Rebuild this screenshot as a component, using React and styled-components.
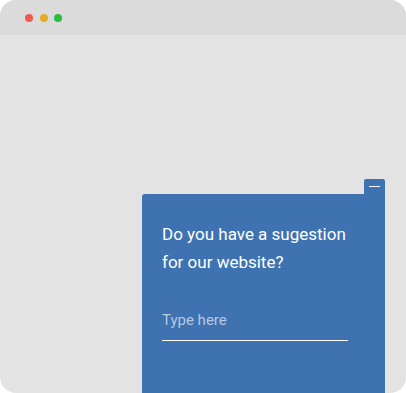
import styled, { createGlobalStyle } from "styled-components";

const GlobalStyle = createGlobalStyle`
  html, body {
    margin: 0;
    background: #ffffff;
    font-family: Roboto, "Liberation Sans", sans-serif;
  }
`;

const Frame = styled.div`
  width: 406px;
  height: 393px;
  border-radius: 16px;
  overflow: hidden;
  display: flex;
  flex-direction: column;
  background: #e3e3e3;
`;

const TitleBar = styled.div`
  height: 35px;
  flex-shrink: 0;
  background: #dbdbdb;
  display: flex;
  align-items: center;
  gap: 6.5px;
  padding-left: 25px;
`;

const Dot = styled.span`
  width: 8px;
  height: 8px;
  border-radius: 50%;
  background: ${(p) => p.color};
`;

const Content = styled.div`
  flex: 1;
  display: flex;
  flex-direction: column;
  align-items: flex-end;
  padding: 144px 21px 0 0;
  min-height: 0;
`;

const Widget = styled.div`
  width: 243px;
  flex: 1;
  display: flex;
  flex-direction: column;
  align-items: flex-end;
`;

const Tab = styled.button`
  width: 21px;
  height: 15px;
  border: none;
  padding: 0;
  background: #3e72b0;
  border-radius: 2px 2px 0 0;
  display: flex;
  align-items: center;
  justify-content: center;
  cursor: pointer;
`;

const Dash = styled.span`
  width: 11px;
  height: 1px;
  background: #ffffff;
`;

const Panel = styled.div`
  align-self: stretch;
  flex: 1;
  background: #3e72b0;
  border-radius: 3px 0 0 0;
  padding: 26px 20px 0;
  box-sizing: border-box;
`;

const Question = styled.p`
  margin: 0;
  color: #ffffff;
  font-size: 17px;
  line-height: 28px;
`;

const Input = styled.input`
  display: block;
  margin-top: 34px;
  width: 186px;
  box-sizing: border-box;
  border: none;
  border-bottom: 1px solid #ffffff;
  background: transparent;
  padding: 0 0 10px;
  font-family: Roboto, "Liberation Sans", sans-serif;
  font-size: 15px;
  line-height: 20px;
  color: #ffffff;
  outline: none;

  &::placeholder {
    color: #b7c9e2;
  }
`;

export default function App() {
  return (
    <>
      <GlobalStyle />
      <Frame>
        <TitleBar>
          <Dot color="#ec5a50" />
          <Dot color="#e5aa2a" />
          <Dot color="#2cbc3e" />
        </TitleBar>
        <Content>
          <Widget>
            <Tab aria-label="Minimize">
              <Dash />
            </Tab>
            <Panel>
              <Question>
                Do you have a sugestion
                <br />
                for our website?
              </Question>
              <Input placeholder="Type here" />
            </Panel>
          </Widget>
        </Content>
      </Frame>
    </>
  );
}
